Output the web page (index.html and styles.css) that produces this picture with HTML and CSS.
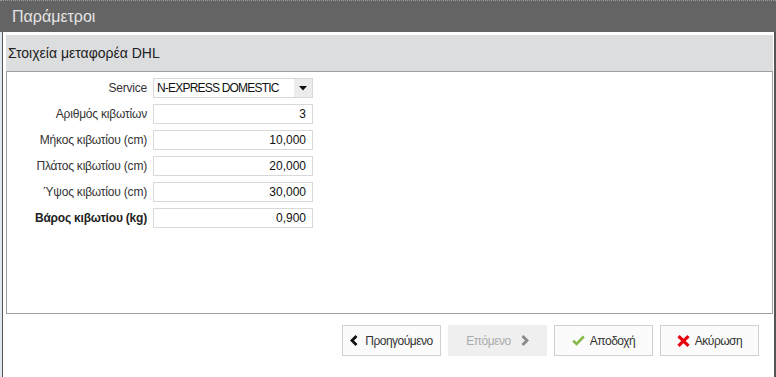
FILE: index.html
```html
<!DOCTYPE html>
<html>
<head>
<meta charset="utf-8">
<link rel="stylesheet" href="styles.css">
</head>
<body>
<div class="titlebar">Παράμετροι</div>
<div class="frame">
  <div class="panel">
    <div class="panel-head">Στοιχεία μεταφορέα DHL</div>
    <div class="panel-body">
      <div class="form">
        <label class="lbl">Service</label>
        <div class="combo"><span class="combo-text">N-EXPRESS DOMESTIC</span><span class="combo-btn"><svg width="8" height="5" viewBox="0 0 8 5"><path d="M0 0H8L4 4.5Z" fill="#111"/></svg></span></div>
        <label class="lbl">Αριθμός κιβωτίων</label>
        <div class="field">3</div>
        <label class="lbl">Μήκος κιβωτίου (cm)</label>
        <div class="field">10,000</div>
        <label class="lbl">Πλάτος κιβωτίου (cm)</label>
        <div class="field">20,000</div>
        <label class="lbl">Ύψος κιβωτίου (cm)</label>
        <div class="field">30,000</div>
        <label class="lbl bold">Βάρος κιβωτίου (kg)</label>
        <div class="field">0,900</div>
      </div>
    </div>
  </div>
  <div class="buttons">
    <button class="btn"><svg class="ico" width="8" height="11" viewBox="0 0 8 11"><path d="M6.5 1L2 5.5L6.5 10" fill="none" stroke="#111" stroke-width="2.8"/></svg><span class="gap"></span>Προηγούμενο</button>
    <button class="btn disabled">Επόμενο<span class="gap wide"></span><svg class="ico" width="8" height="11" viewBox="0 0 8 11"><path d="M1.5 1L6 5.5L1.5 10" fill="none" stroke="#8a8a8a" stroke-width="2.8"/></svg></button>
    <button class="btn"><svg class="ico" width="13" height="11" viewBox="0 0 13 11"><path d="M1.2 5.8L4.6 9L11.8 1.5" fill="none" stroke="#86b84a" stroke-width="2.6"/></svg><span class="gap small"></span>Αποδοχή</button>
    <button class="btn"><svg class="ico" width="13" height="12" viewBox="0 0 13 12"><path d="M1.5 1.2L11.5 10.8M11.5 1.2L1.5 10.8" fill="none" stroke="#e8000b" stroke-width="3.2"/></svg><span class="gap small"></span>Ακύρωση</button>
  </div>
</div>
</body>
</html>
```
FILE: styles.css
```css
html, body {
  margin: 0;
  padding: 0;
}
body {
  width: 776px;
  height: 377px;
  background: #dfe7ef;
  font-family: "Liberation Sans", Arial, sans-serif;
  font-size: 12px;
  color: #333;
  overflow: hidden;
}
.titlebar {
  height: 31px;
  background: #646464;
  border-top: 1px dotted #9a9a9a;
  color: #e4e4e4;
  font-size: 16px;
  line-height: 32px;
  padding-left: 12px;
}
.frame {
  margin-left: 2px;
  width: 767px;
  height: 343px;
  background: #fff;
  border-left: 1px solid #555;
  border-right: 2px solid #555;
  border-bottom: 1px solid #555;
  padding: 3px 1px 0 3px;
  display: flex;
  flex-direction: column;
}
.panel {
  width: 767px;
}
.panel-head {
  height: 36px;
  background: #dcdddf;
  color: #222;
  font-size: 14px;
  line-height: 37px;
  padding-left: 2px;
}
.panel-body {
  height: 241px;
  border: 1px solid #a0a0a0;
}
.form {
  display: grid;
  grid-template-columns: 140px 160px;
  grid-auto-rows: 20px;
  column-gap: 6px;
  row-gap: 6px;
  padding-top: 6px;
}
.lbl {
  text-align: right;
  line-height: 20px;
  color: #333;
  white-space: nowrap;
  letter-spacing: -0.2px;
}
.lbl.bold {
  font-weight: bold;
  color: #222;
}
.field {
  border: 1px solid #d8d8d8;
  box-sizing: border-box;
  text-align: right;
  padding-right: 6px;
  line-height: 18px;
  color: #111;
}
.combo {
  border: 1px solid #d8d8d8;
  box-sizing: border-box;
  display: flex;
  line-height: 18px;
  color: #111;
}
.combo-text {
  flex: 1;
  padding-left: 3px;
  white-space: nowrap;
  letter-spacing: -0.8px;
}
.combo-btn {
  width: 18px;
  background: #ececec;
  display: flex;
  align-items: center;
  justify-content: center;
}
.buttons {
  display: flex;
  justify-content: flex-end;
  gap: 7px;
  margin-top: 11px;
  padding-right: 14px;
}
.btn {
  width: 99px;
  height: 31px;
  box-sizing: border-box;
  background: #fbfbfb;
  border: 1px solid #d0d0d0;
  font-family: "Liberation Sans", Arial, sans-serif;
  font-size: 12px;
  letter-spacing: -0.5px;
  color: #333;
  display: flex;
  align-items: center;
  justify-content: center;
  padding: 0;
}
.btn.disabled {
  background: #efefef;
  border-color: #efefef;
  color: #ababab;
}
.ico {
  display: block;
}
.gap {
  width: 7px;
}
.gap.wide {
  width: 10px;
}
.gap.small {
  width: 5px;
}
```
